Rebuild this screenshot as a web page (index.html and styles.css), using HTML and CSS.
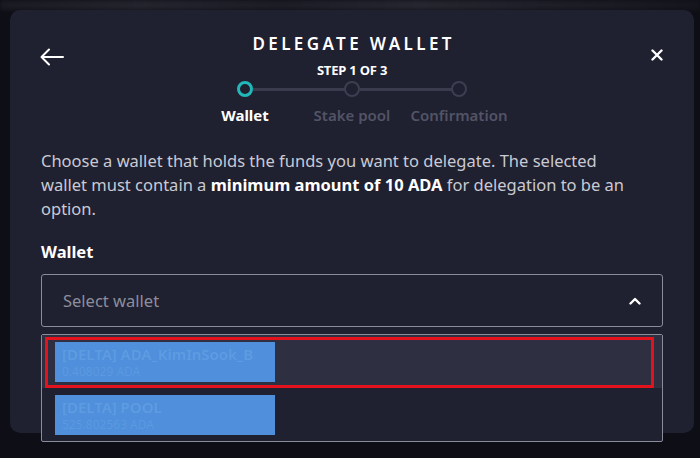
FILE: index.html
```html
<!DOCTYPE html>
<html>
<head>
<meta charset="utf-8">
<link rel="stylesheet" href="styles.css">
</head>
<body>
<div class="backdrop-strip"></div>
<div class="modal">
  <header class="head">
    <button class="icon-btn back" aria-label="Back">
      <svg width="24" height="18" viewBox="0 0 24 18"><path d="M23 9H2M9 1.5L1.5 9 9 16.5" fill="none" stroke="#fff" stroke-width="2" stroke-linecap="round" stroke-linejoin="round"/></svg>
    </button>
    <div class="center">
      <h1 class="title">DELEGATE WALLET</h1>
      <div class="step">STEP 1 OF 3</div>
      <div class="stepper">
        <div class="st active"><span class="dot"></span><span class="lbl">Wallet</span></div>
        <div class="st"><span class="dot"></span><span class="lbl">Stake pool</span></div>
        <div class="st"><span class="dot"></span><span class="lbl">Confirmation</span></div>
      </div>
    </div>
    <button class="icon-btn close" aria-label="Close">
      <svg width="12" height="12" viewBox="0 0 12 12"><path d="M1.5 1.5l9 9M10.5 1.5l-9 9" fill="none" stroke="#fff" stroke-width="2.4" stroke-linecap="round"/></svg>
    </button>
  </header>
  <p class="desc">Choose a wallet that holds the funds you want to delegate. The selected wallet must contain a <b>minimum amount of 10 ADA</b> for delegation to be an option.</p>
  <div class="field-label">Wallet</div>
  <div class="select-wrap">
    <div class="select">
      <span class="ph">Select wallet</span>
      <svg width="12" height="8" viewBox="0 0 12 8"><path d="M1.5 6.5L6 2l4.5 4.5" fill="none" stroke="#fff" stroke-width="2.4" stroke-linecap="round" stroke-linejoin="round"/></svg>
    </div>
    <ul class="menu">
      <li class="opt hl">
        <div class="redact"><span class="nm">[DELTA] ADA_KimInSook_B</span><span class="amt">0.408029 ADA</span></div>
        <span class="mark"></span>
      </li>
      <li class="opt">
        <div class="redact"><span class="nm">[DELTA] POOL</span><span class="amt">525.802563 ADA</span></div>
      </li>
    </ul>
  </div>
</div>
</body>
</html>
```
FILE: styles.css
```css
* { box-sizing: border-box; }
html, body { margin: 0; padding: 0; }
body {
  width: 700px;
  height: 458px;
  overflow: hidden;
  background: #0d0e16;
  font-family: "Noto Sans", "Open Sans", sans-serif;
  padding: 10px 6px 0 10px;
  position: relative;
}
.backdrop-strip {
  position: absolute;
  left: 0; top: 0; right: 0; height: 10px;
  background: linear-gradient(90deg, #1a1b22 0%, #24252d 20%, #1c1d25 40%, #26272f 60%, #1d1e26 80%, #15161d 100%);
  filter: blur(2px);
}
.modal {
  position: relative;
  width: 684px;
  height: 423px;
  background: #1f2030;
  border-radius: 10px;
  padding: 24px 31px 0 31px;
}
.head {
  display: grid;
  grid-template-columns: 1fr auto 1fr;
  align-items: start;
}
.icon-btn {
  background: none;
  border: 0;
  padding: 0;
  display: flex;
}
.back { justify-self: start; margin-top: 14px; margin-left: -1px; }
.close { justify-self: end; margin-top: 15px; margin-right: 0px; }
.center { display: flex; flex-direction: column; align-items: center; }
.title {
  margin: 0;
  font-size: 17px;
  line-height: 20px;
  font-weight: 600;
  letter-spacing: 3.4px;
  color: #fff;
  margin-right: -3.4px;
}
.step {
  margin-top: 9px;
  font-size: 13px;
  line-height: 15px;
  font-weight: 700;
  color: #fff;
  letter-spacing: -0.2px;
}
.stepper {
  display: flex;
  margin-top: 3px;
}
.st {
  width: 107px;
  display: flex;
  flex-direction: column;
  align-items: center;
  position: relative;
}
.st + .st::before {
  content: "";
  position: absolute;
  top: 6.5px;
  left: -46px;
  width: 93px;
  height: 3px;
  background: #3a3b4c;
}
.dot {
  width: 16px;
  height: 16px;
  border-radius: 50%;
  border: 2px solid #3d3e50;
  position: relative;
  z-index: 1;
}
.st.active .dot { border: 3px solid #22b8b8; }
.lbl {
  margin-top: 9px;
  font-size: 15px;
  line-height: 19px;
  font-weight: 600;
  color: #525466;
  white-space: nowrap;
}
.st.active .lbl { color: #fff; font-weight: 700; }
.desc {
  margin: 24px 0 0;
  max-width: 600px;
  font-size: 16.5px;
  line-height: 24px;
  color: #c9cad3;
}
.desc b { color: #fff; font-weight: 700; }
.field-label {
  margin-top: 20px;
  font-size: 16.5px;
  line-height: 22px;
  font-weight: 700;
  color: #fff;
}
.select-wrap { position: relative; margin-top: 11px; }
.select {
  height: 53px;
  border: 1px solid #8b8c9a;
  border-radius: 3px;
  display: flex;
  align-items: center;
  justify-content: space-between;
  padding: 0 21px 0 21px;
}
.ph { font-size: 16.5px; color: #8d8e9c; }
.menu {
  position: absolute;
  left: 0; right: 0;
  top: 60px;
  margin: 0;
  padding: 0;
  list-style: none;
  border: 1px solid #8b8c9a;
  border-radius: 2px;
  background: #1f2030;
}
.opt {
  position: relative;
  height: 53px;
  padding: 7px 0 0 13px;
}
.opt.hl { background: #2e2f41; }
.redact {
  width: 220px;
  height: 40px;
  background: #4f8fdb;
  display: flex;
  flex-direction: column;
  padding: 2px 0 0 7px;
  overflow: hidden;
}
.nm { font-size: 15px; line-height: 20px; color: #5e9ce2; font-weight: 600; }
.amt { font-size: 12px; line-height: 15px; color: #5b99e0; }
.mark {
  position: absolute;
  left: 3px; top: 2px; right: 8px; bottom: 0;
  border: 3px solid #e3121c;
}
```
